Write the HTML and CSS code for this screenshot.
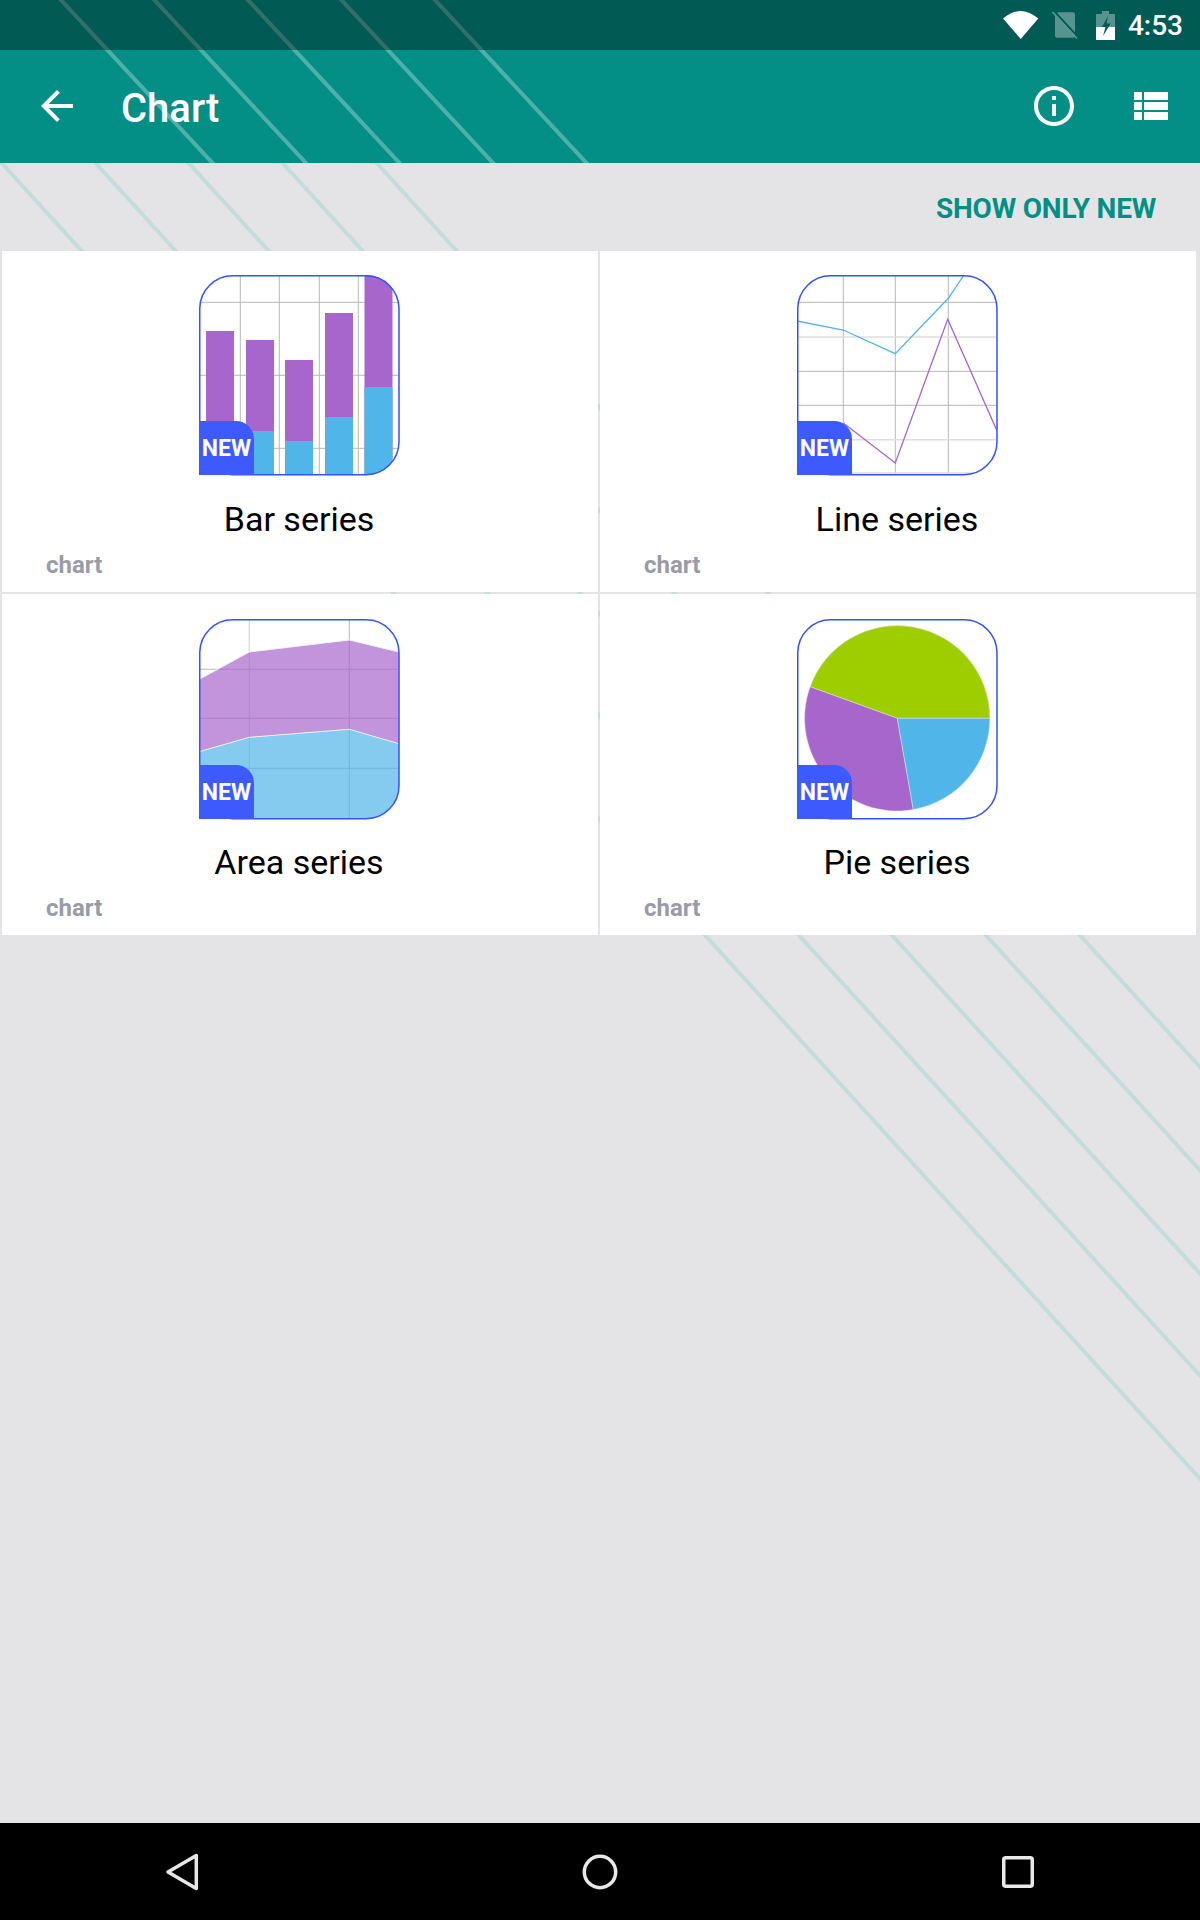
FILE: index.html
```html
<!DOCTYPE html>
<html lang="en">
<head>
<meta charset="utf-8">
<title>Chart</title>
<link rel="stylesheet" href="styles.css">
</head>
<body>
<div class="screen">
  <header class="header">
    <svg class="stripes stripes-head" viewBox="0 0 1200 163" aria-hidden="true">
      <path d="M47 -15L219 170M140.500 -15L312.500 170M234 -15L406 170M327.500 -15L499.500 170M421 -15L593 170"/>
    </svg>
    <div class="status">
      <svg class="st-wifi" width="36" height="28" viewBox="0 0 36 28"><path class="w" d="M17.700 28L0 7.500Q17.700 -7.500 35.300 7.500Z"/></svg>
      <svg class="st-sim" width="26" height="28" viewBox="0 0 26 28">
        <path class="dim" d="M6 1.300H21Q23 1.300 23 3.300V24.700Q23 26.700 21 26.700H5Q3 26.700 3 24.700V4.300Z"/>
        <path class="cut" d="M1.500 -0.500L26 26"/>
        <path class="dimline" d="M0.500 1L25 27.500"/>
      </svg>
      <svg class="st-batt" width="19" height="29" viewBox="0 0 19 29">
        <path class="dim" d="M6 0H13V3H19V16H0V3H6Z"/>
        <rect class="w" x="0" y="16" width="19" height="13"/>
        <path class="bolt" d="M12 5L6 16H9.500L7 25L14.700 12.500H10.500Z"/>
      </svg>
      <span class="time">4:53</span>
    </div>
    <div class="appbar">
      <svg class="ic48 back" viewBox="0 0 24 24"><path d="M20 11H7.830l5.590-5.590L12 4l-8 8 8 8 1.410-1.410L7.830 13H20v-2z"/></svg>
      <h1 class="title">Chart</h1>
      <svg class="ic48 info" viewBox="0 0 24 24"><path d="M11 7h2v2h-2zm0 4h2v6h-2zm1-9C6.480 2 2 6.480 2 12s4.480 10 10 10 10-4.480 10-10S17.520 2 12 2zm0 18c-4.410 0-8-3.590-8-8s3.590-8 8-8 8 3.590 8 8-3.590 8-8 8z"/></svg>
      <svg class="ic48 list" viewBox="0 0 24 24"><path d="M4 14h4v-4H4v4zm0 5h4v-4H4v4zM4 9h4V5H4v4zm5 5h12v-4H9v4zm0 5h12v-4H9v4zM9 5v4h12V5H9z"/></svg>
    </div>
  </header>

  <main class="main">
    <svg class="stripes stripes-main" viewBox="0 0 1200 1660" aria-hidden="true">
      <path d="M-12 -15L1518 1665M82 -15L1612 1665M175 -15L1705 1665M269 -15L1799 1665M363 -15L1893 1665"/>
    </svg>
    <div class="filter"><span class="filter-btn">SHOW ONLY NEW</span></div>
    <div class="grid">

      <article class="card">
        <div class="icon">
          <svg class="chart-svg" viewBox="0 0 200 200">
            <defs><clipPath id="c1"><rect width="200" height="200" rx="33"/></clipPath></defs>
            <g clip-path="url(#c1)">
              <path class="grid-line" d="M41.300 0V200M80.300 0V200M120.300 0V200M159.300 0V200M0 27.300H200M0 100.300H200M0 173.300H200"/>
              <rect class="purple" x="7" y="56" width="28" height="144"/>
              <rect class="purple" x="47" y="65" width="28" height="135"/>
              <rect class="purple" x="86" y="85" width="28" height="115"/>
              <rect class="purple" x="126" y="38" width="28" height="162"/>
              <rect class="purple" x="165.500" y="0" width="28" height="200"/>
              <rect class="blue" x="47" y="156" width="28" height="44"/>
              <rect class="blue" x="86" y="166" width="28" height="34"/>
              <rect class="blue" x="126" y="142" width="28" height="58"/>
              <rect class="blue" x="165.500" y="112" width="28" height="88"/>
            </g>
            <rect class="frame" x="0.750" y="0.750" width="199.250" height="199" rx="33"/>
          </svg>
          <span class="badge">NEW</span>
        </div>
        <h2 class="name">Bar series</h2>
        <p class="tag">chart</p>
      </article>

      <article class="card">
        <div class="icon">
          <svg class="chart-svg" viewBox="0 0 200 200">
            <defs><clipPath id="c2"><rect width="200" height="200" rx="33"/></clipPath></defs>
            <g clip-path="url(#c2)">
              <path class="grid-line" d="M46.300 0V200M98.300 0V200M151.300 0V200M0 27.300H200M0 96.300H200M0 130.300H200"/>
              <path class="grid-light" d="M0 62H200M0 164.700H200M0 198H200"/>
              <polyline class="line-blue" points="0,46 46.300,55 98.300,78.700 151.300,23.300 167,0"/>
              <polyline class="line-purple" points="46.300,148 98.300,188 150.700,44.300 200,155.700"/>
            </g>
            <rect class="frame" x="0.750" y="0.750" width="199.250" height="199" rx="33"/>
          </svg>
          <span class="badge">NEW</span>
        </div>
        <h2 class="name">Line series</h2>
        <p class="tag">chart</p>
      </article>

      <article class="card card-low">
        <div class="icon">
          <svg class="chart-svg" viewBox="0 0 200 200">
            <defs><clipPath id="c3"><rect width="200" height="200" rx="33"/></clipPath></defs>
            <g clip-path="url(#c3)">
              <path class="grid-light" d="M50.300 0V200"/>
              <path class="grid-line" d="M150.300 0V200M0 50.300H200M0 99.300H200M0 149.300H200"/>
              <polygon class="area-purple" points="0,60.500 50.300,33 150.300,21 200,33 200,124.700 150.300,110.300 50.300,118.300 0,132.700"/>
              <polygon class="area-blue" points="0,132.700 50.300,118.300 150.300,110.300 200,124.700 200,200 0,200"/>
              <polyline class="area-edge" points="0,132.700 50.300,118.300 150.300,110.300 200,124.700"/>
              <polyline class="area-edge" points="0,60.500 50.300,33 150.300,21 200,33"/>
            </g>
            <rect class="frame" x="0.750" y="0.750" width="199.250" height="199" rx="33"/>
          </svg>
          <span class="badge">NEW</span>
        </div>
        <h2 class="name">Area series</h2>
        <p class="tag">chart</p>
      </article>

      <article class="card card-low">
        <div class="icon">
          <svg class="chart-svg" viewBox="0 0 200 200">
            <path class="green slice" d="M100.300 99.300H193A92.700 92.700 0 0 0 13.100 67.800Z"/>
            <path class="purple slice" d="M100.300 99.300L13.100 67.800A92.700 92.700 0 0 0 116.350 190.600Z"/>
            <path class="blue slice" d="M100.300 99.300L116.350 190.600A92.700 92.700 0 0 0 193 99.300Z"/>
            <rect class="frame" x="0.750" y="0.750" width="199.250" height="199" rx="33"/>
          </svg>
          <span class="badge">NEW</span>
        </div>
        <h2 class="name">Pie series</h2>
        <p class="tag">chart</p>
      </article>

    </div>
  </main>

  <nav class="nav">
    <svg class="nav-ic" viewBox="0 0 48 48"><path d="M38.300 7.500V40.500L10 24Z"/></svg>
    <svg class="nav-ic" viewBox="0 0 48 48"><circle cx="24" cy="24" r="15.700"/></svg>
    <svg class="nav-ic" viewBox="0 0 48 48"><rect x="9.750" y="9.750" width="28.500" height="28.500" rx="2"/></svg>
  </nav>
</div>
</body>
</html>
```

FILE: styles.css
```css
* { box-sizing: border-box; }
html, body { margin: 0; padding: 0; }
body { font-family: Roboto, "Liberation Sans", sans-serif; background: #e4e4e6; }

.screen { width: 1200px; height: 1920px; display: flex; flex-direction: column; overflow: hidden; }

.header { position: relative; height: 163px; background: #038f85; flex: none; }
.stripes { position: absolute; left: 0; top: 0; width: 1200px; fill: none; pointer-events: none; }
.stripes-head { height: 163px; stroke: rgba(255,255,255,.3); stroke-width: 4; }
.stripes-main { height: 1660px; stroke: #c4dcdc; stroke-width: 4; }

.status { position: relative; height: 50px; background: rgba(0,0,0,.37); display: flex; align-items: center; justify-content: flex-end; padding-right: 17px; }
.st-wifi { margin-right: 13px; }
.st-sim { margin-right: 18px; }
.st-batt { margin-right: 13px; }
.status .w { fill: #fff; }
.status .dim { fill: rgba(255,255,255,.35); }
.status .bolt { fill: #005a54; }
.status .cut { fill: none; stroke: #005a54; stroke-width: 2; }
.status .dimline { fill: none; stroke: #5a9994; stroke-width: 1.600; }
.time { color: #fff; font-size: 28px; font-weight: 500; line-height: 30px; padding-top: 2px; }

.appbar { position: relative; height: 113px; display: flex; align-items: center; padding: 0 10px 0 33px; }
.ic48 { width: 48px; height: 48px; fill: #fff; flex: none; }
.title { margin: 0 0 0 40px; padding-top: 5px; color: #fff; font-size: 40px; font-weight: 500; line-height: 48px; flex: 1; }
.back, .info, .list { position: relative; top: -1px; }
.info { margin-right: 48px; }
.list { margin-right: 16px; }

.main { position: relative; flex: 1; }
.filter { position: relative; height: 88px; display: flex; align-items: center; justify-content: flex-end; padding: 4px 44px 0 0; }
.filter-btn { color: #038f85; font-size: 28px; font-weight: 700; line-height: 34px; letter-spacing: -.2px; }

.grid { position: relative; display: grid; grid-template-columns: 596px 596px; grid-auto-rows: 341px; gap: 2px; padding-left: 2px; }
.card { background: #fff; padding: 24px 2px 0 0; display: flex; flex-direction: column; align-items: center; }
.card-low { padding-top: 25px; }
.card-low .name { margin-top: 23px; }

.icon { position: relative; width: 200px; height: 200px; flex: none; }
.chart-svg { display: block; width: 200px; height: 200px; overflow: visible; }
.frame { fill: none; stroke: #3352ff; stroke-width: 1.500; }
.badge { position: absolute; left: 0; bottom: 0; width: 55px; height: 54px; background: #3d5afe; border-radius: 0 18px 0 0; color: #fff; font-size: 23px; font-weight: 700; line-height: 55px; text-align: center; }

.grid-line { fill: none; stroke: #b8b8b8; stroke-width: 1; }
.grid-light { fill: none; stroke: #dedede; stroke-width: 1.500; }
.purple { fill: #a666cc; }
.blue { fill: #50b5e8; }
.green { fill: #9fce00; }
.slice { stroke: #e4e8e0; stroke-width: .5; }
.line-blue { fill: none; stroke: #50b5e8; stroke-width: 1.300; }
.line-purple { fill: none; stroke: #a666cc; stroke-width: 1.300; }
.area-purple { fill: #a666cc; fill-opacity: .7; }
.area-blue { fill: #50b5e8; fill-opacity: .7; }
.area-edge { fill: none; stroke: #eef2f6; stroke-width: 1; }

.name { margin: 24px 0 0; color: #000; font-size: 34px; font-weight: 400; line-height: 40px; }
.tag { margin: 11px 0 0 44px; align-self: flex-start; color: #9a9ba6; font-size: 24px; font-weight: 700; line-height: 30px; }

.nav { height: 97px; flex: none; background: #000; display: flex; align-items: center; justify-content: space-between; padding: 0 158px; }
.nav-ic { width: 48px; height: 48px; fill: none; stroke: #e8e8e8; stroke-width: 3.500; stroke-linejoin: round; }
```
